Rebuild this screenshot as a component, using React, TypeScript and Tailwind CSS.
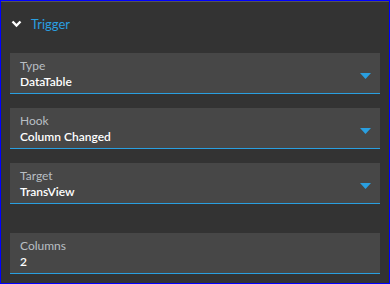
import React from "react";

const Caret = () => (
  <svg width="11" height="6" viewBox="0 0 11 6" className="absolute right-[9px] top-[20px]">
    <path d="M0 0 H11 L5.5 6 Z" fill="#2a9fe0" />
  </svg>
);

function Field({ label, value, select }: { label: string; value: string; select?: boolean }) {
  return (
    <div className="relative h-[41px] bg-[#474747] border-b border-[#2a9fe0] pl-[10px] pt-[5px]">
      <div className="text-[12px] leading-[16px] text-[#b9bfc4]">{label}</div>
      <div className="text-[12px] leading-[16px] text-white font-semibold">{value}</div>
      {select && <Caret />}
    </div>
  );
}

export default function App() {
  return (
    <div
      className="w-[390px] h-[284px] bg-[#333333] border border-[#0000ff] overflow-hidden"
      style={{ fontFamily: 'Lato, "Open Sans", sans-serif' }}
    >
      <div className="h-full border-t border-[#555555]">
        <div className="flex items-center h-[41px] pl-[10px] pt-[3px]">
          <svg width="11" height="8" viewBox="0 0 11 8" className="mr-[9px]">
            <path d="M1.5 1.5 L5.5 5.5 L9.5 1.5" stroke="#ffffff" strokeWidth="2.4" fill="none" />
          </svg>
          <span className="text-[13px] leading-[18px] text-[#2a9fe0]">Trigger</span>
        </div>
        <div className="px-[9px] pt-[10px] flex flex-col">
          <Field label="Type" value="DataTable" select />
          <div className="h-[14px]" />
          <Field label="Hook" value="Column Changed" select />
          <div className="h-[14px]" />
          <Field label="Target" value="TransView" select />
          <div className="h-[29px]" />
          <Field label="Columns" value="2" />
        </div>
      </div>
    </div>
  );
}
